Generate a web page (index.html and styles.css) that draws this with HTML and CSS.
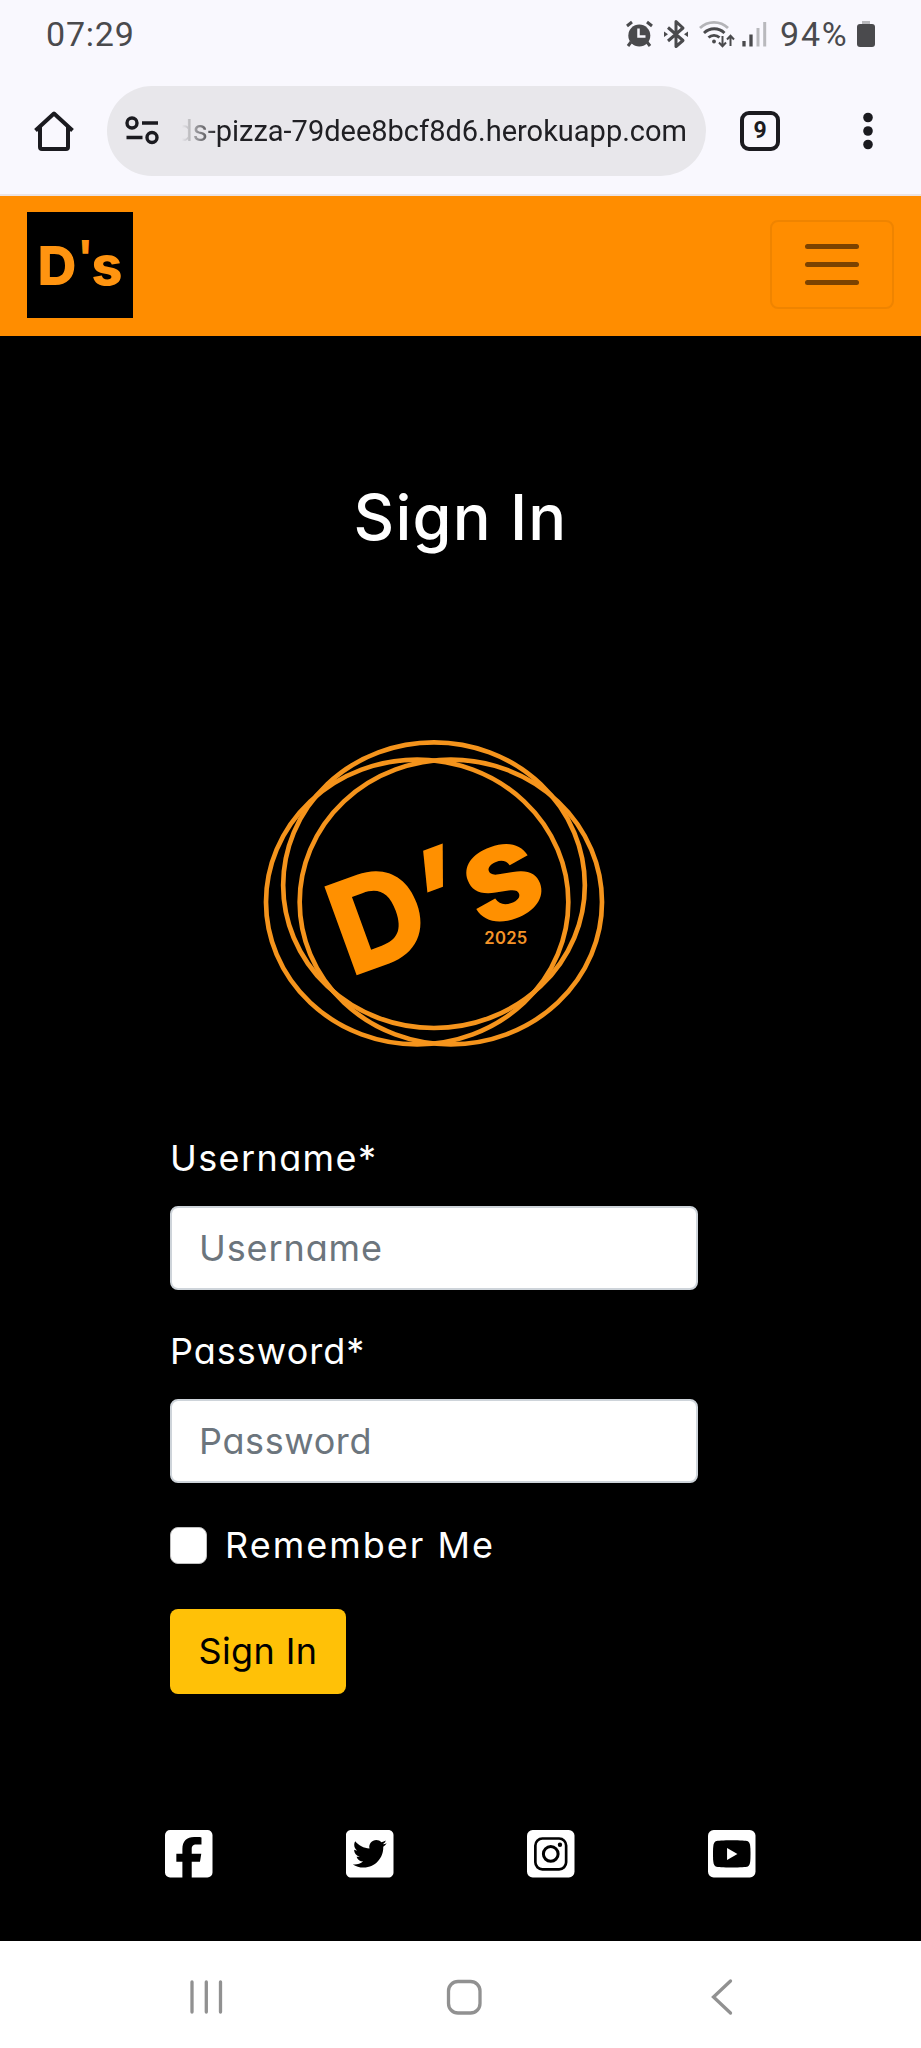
FILE: index.html
```html
<!DOCTYPE html>
<html lang="en">
<head>
<meta charset="utf-8">
<title>D's - Sign In</title>
<link rel="stylesheet" href="styles.css">
</head>
<body>
<div class="status">
  <span class="clock">07:29</span>
  <div class="status-right">
    <svg class="sys-icons" width="144" height="30" viewBox="0 0 144 30">
      <g fill="#4a4a4d" stroke="#4a4a4d">
        <circle cx="14.300" cy="16.500" r="11" stroke="none"/>
        <path d="M6 23l-3 4M22 23l3 4M2 7l5-4M27 7l-5-4" fill="none" stroke-width="3"/>
        <path d="M13.500 9.500v8h7" fill="none" stroke="#f9f8fe" stroke-width="2.500"/>
        <path d="M43 8.500l15 13-7 6V2.500l7 6.500-15 13" fill="none" stroke-width="3" stroke-linejoin="round"/>
        <path d="M39 12.500l4 2.700-4 2.700zM63 12.500l-4 2.700 4 2.700z" stroke="none"/>
        <path d="M75 9a20 20 0 0 1 28 0" fill="none" stroke="#b4b4b8" stroke-width="2.800"/>
        <path d="M79 14a14.500 14.500 0 0 1 20.500 0M83.500 18.500a8 8 0 0 1 11 0" fill="none" stroke-width="2.800"/>
        <circle cx="89" cy="22.500" r="1.900" stroke="none"/>
        <path d="M97.500 17v9.500M94 23.500l3.500 3.700 3.500-3.700M105.500 27V17.500M102 20.500l3.500-3.700 3.500 3.700" fill="none" stroke-width="2"/>
        <path d="M119 22v5.500M126 15.500v12" stroke-width="3.300"/>
        <path d="M133 9v18.500M139.700 3v24.500" stroke="#b9b9bd" stroke-width="3"/>
      </g>
    </svg>
    <span class="percent">94%</span>
    <svg width="18" height="28" viewBox="0 0 18 28"><path d="M5 1h8v4H5z" fill="#b9b9bd"/><rect y="4" width="18" height="23" rx="3" fill="#4a4a4d"/></svg>
  </div>
</div>
<div class="toolbar">
  <svg class="home" width="42" height="42" viewBox="0 0 42 42" fill="none" stroke="#1b1b20" stroke-width="4"><path d="M7 17v20q0 2 2 2h24q2 0 2-2V17M2.500 20.500L21 3.500l18.500 17" stroke-linejoin="round"/></svg>
  <div class="address">
    <svg width="34" height="30" viewBox="0 0 34 30" fill="none" stroke="#1b1b20" stroke-width="3.400"><circle cx="7" cy="7" r="5"/><circle cx="27" cy="21.500" r="5"/><path d="M17 7h16M1.500 21.500h16"/></svg>
    <span class="url">ds-pizza-79dee8bcf8d6.herokuapp.com</span>
  </div>
  <div class="tabs">9</div>
  <svg class="more" width="12" height="40" viewBox="0 0 12 40" fill="#1b1b20"><circle cx="6" cy="6.500" r="4.800"/><circle cx="6" cy="20" r="4.800"/><circle cx="6" cy="33.500" r="4.800"/></svg>
</div>
<header class="navbar">
  <svg class="brand" width="106" height="106" viewBox="0 0 106 106"><rect width="106" height="106"/><text class="brand-text"><tspan x="10.500" y="72.500">D</tspan><tspan class="mark" x="50.500" y="60">'</tspan><tspan x="64.500" y="72.500">s</tspan></text></svg>
  <button class="toggler" aria-label="Menu"><i></i><i></i><i></i></button>
</header>
<main>
  <h1>Sign In</h1>
  <svg class="emblem" width="370" height="340" viewBox="0 0 1110 1020">
    <g fill="none" stroke="#f5941c" stroke-width="14">
      <ellipse cx="552" cy="495.500" rx="452.500" ry="428.500"/>
      <ellipse cx="501.500" cy="546" rx="453.500" ry="427"/>
      <ellipse cx="602.500" cy="546" rx="453.500" ry="427"/>
    </g>
    <g class="emblem-text" transform="rotate(-20)">
      <text x="17" y="829">D</text>
      <text transform="translate(370 829) skewX(-17)" x="-71" y="0" text-anchor="middle">'</text>
      <text class="emblem-s" x="547" y="828" text-anchor="middle">s</text>
    </g>
    <text class="year" x="703" y="671" textLength="129">2025</text>
  </svg>
  <form class="signin">
    <label class="user-label" for="user">Username*</label>
    <input class="field user" id="user" type="text" placeholder="Username">
    <label class="pass-label" for="pass">Password*</label>
    <input class="field pass" id="pass" type="password" placeholder="Password">
    <div class="remember"><input class="box" id="rem" type="checkbox"><label for="rem">Remember Me</label></div>
    <button class="submit" type="button">Sign In</button>
  </form>
  <footer class="social">
    <svg viewBox="0 32 448 448"><path d="M400 32H48A48 48 0 0 0 0 80v352a48 48 0 0 0 48 48h116V332h-57v-76h57v-45c0-75 42-113 110-113 36 0 70 4 70 4v66h-48c-34 0-44 18-44 40v48h90l-12 76h-78v148h148a48 48 0 0 0 48-48V80a48 48 0 0 0-48-48z"/></svg>
    <svg viewBox="0 32 448 448"><path d="M400 32H48C21.500 32 0 53.500 0 80v352c0 26.500 21.500 48 48 48h352c26.500 0 48-21.500 48-48V80c0-26.500-21.500-48-48-48zm-48.900 158.800c.2 2.800.2 5.700.2 8.500 0 86.700-66 186.600-186.600 186.600-37.200 0-71.700-10.800-100.700-29.400 5.300.6 10.400.8 15.800.8 30.700 0 58.900-10.400 81.400-28-28.800-.6-53-19.500-61.300-45.500 10.100 1.500 19.200 1.500 29.600-1.200-30-6.100-52.500-32.500-52.500-64.400v-.8c8.700 4.900 18.900 7.900 29.600 8.300a65.447 65.447 0 0 1-29.200-54.600c0-12.200 3.200-23.400 8.900-33.100 32.300 39.800 80.800 65.800 135.200 68.600-9.300-44.500 24-80.600 64-80.600 18.900 0 35.900 7.900 47.900 20.700 14.800-2.800 29-8.300 41.600-15.800-4.900 15.200-15.200 28-28.800 36.100 13.200-1.400 26-5.100 37.800-10.200-8.900 13.100-20.100 24.700-32.900 34z"/></svg>
    <svg viewBox="0 0 142 142"><rect width="142" height="142" rx="17"/><g fill="none" stroke="#000"><rect x="25" y="25.500" width="92" height="92" rx="21" stroke-width="8"/><circle cx="71" cy="71.500" r="22" stroke-width="9"/></g><circle cx="98.500" cy="44" r="6.500" fill="#000"/></svg>
    <svg viewBox="0 0 142 142"><rect width="142" height="142" rx="17"/><path d="M71 31c25 0 43 1 48 3 8 4 8 20 8 38s0 33-8 37c-5 2-23 3-48 3s-43-1-48-3c-8-4-8-19-8-37s0-34 8-38c5-2 23-3 48-3z" fill="#000"/><path d="M57 54v36l31-18z"/></svg>
  </footer>
</main>
<nav class="sysnav">
  <svg width="40" height="40" viewBox="0 0 40 40"><path d="M6 5v30M20.300 5v30M34.500 5v30"/></svg>
  <svg width="40" height="40" viewBox="0 0 40 40"><rect x="3.500" y="4.500" width="31.500" height="31.500" rx="9.500"/></svg>
  <svg width="40" height="40" viewBox="0 0 40 40"><path d="M27.500 4L10.500 20l17 16"/></svg>
</nav>
</body>
</html>
```
FILE: styles.css
```css
* { box-sizing: border-box; }
body { margin: 0; width: 921px; height: 2048px; background: #f9f8fe; font-family: Inter, "Liberation Sans", sans-serif; overflow: hidden; }
svg { display: block; flex: none; }

.status { height: 68px; padding: 0 46px; display: flex; align-items: center; justify-content: space-between; color: #4a4a4d; font: 34px/68px Roboto, sans-serif; }
.clock { letter-spacing: .8px; }
.status-right { display: flex; align-items: center; }
.percent { margin: 0 2px 0 11px; width: 75px; letter-spacing: 1.800px; }

.toolbar { height: 128px; padding: 20px 47.500px 20px 33px; display: flex; align-items: center; border-bottom: 2px solid #ece4e4; }
.address { flex: none; width: 599px; height: 90px; margin: 0 34px 0 32px; padding: 0 19px 0 18px; display: flex; align-items: center; gap: 17px; border-radius: 45px; background: #e8e7eb; }
.url { flex: 1; display: flex; justify-content: flex-end; overflow: hidden; white-space: nowrap; font: 29px/44px Roboto, sans-serif; color: #202024; -webkit-mask-image: linear-gradient(90deg, transparent 6px, #000 42px); }
.tabs { flex: none; width: 40px; height: 40px; border: 4px solid #1b1b20; border-radius: 9px; text-align: center; font: 700 23px/32px Roboto, sans-serif; color: #1b1b20; }
.more { margin-left: 81.500px; }

.navbar { height: 140px; padding: 0 27px 3px; display: flex; align-items: center; justify-content: space-between; background: #ff8d00; }
.brand-text { font: 800 54px Inter, sans-serif; fill: #ff9410; }
.mark { font-size: 44px; }
.toggler { width: 124px; height: 89px; padding: 0; display: flex; flex-direction: column; align-items: center; justify-content: center; gap: 13.300px; border: 2px solid #ef8400; border-radius: 8px; background: none; }
.toggler i { width: 54px; height: 4.700px; border-radius: 3px; background: #7b4200; }

main { height: 1604.500px; padding-top: 144px; background: #000; color: #fff; }
h1 { margin: 0 0 165px; height: 75px; text-align: center; font-size: 63px; line-height: 75px; font-weight: 500; letter-spacing: 1.200px; }
.emblem { margin-left: 250px; }
.emblem-text { font: 800 389px Inter, sans-serif; fill: #ff9000; }
.emblem-s { font-size: 404px; }
.year { font: 600 50px Inter, sans-serif; fill: #f59428; }

.signin { width: 528px; margin: 72px 0 0 170px; display: flex; flex-direction: column; font-size: 36px; font-feature-settings: "cv11"; }
.signin label { line-height: 53px; height: 54px; }
.user-label { letter-spacing: 1.400px; }
.pass-label { letter-spacing: 1px; }
.field { width: 528px; height: 84px; margin: 20px 0 35px; padding: 0 27px 1px; border: 2px solid #ced4da; border-radius: 8px; background: #fff; font: inherit; font-feature-settings: inherit; }
.user { letter-spacing: .9px; }
.pass { letter-spacing: .6px; }
.field::placeholder { color: #6c757d; opacity: 1; }
.remember { height: 55px; margin-bottom: 36px; display: flex; align-items: center; gap: 18px; letter-spacing: 2px; }
.box { appearance: none; width: 37px; height: 37px; margin: 0; border: 1px solid #bfbfbf; border-radius: 8px; background: #fff; }
.submit { width: 176px; height: 85px; padding: 0 0 2px; border: 0; border-radius: 8px; background: #ffc107; color: #000; font: inherit; letter-spacing: .4px; font-feature-settings: inherit; }

.social { margin: 136px 165px 0; display: flex; justify-content: space-between; }
.social svg { width: 47.500px; height: 47.500px; fill: #fff; }

.sysnav { height: 107.500px; padding: 0 178px 0 186px; display: flex; align-items: center; justify-content: space-between; background: #fff; }
.sysnav svg { margin-top: 5px; fill: none; stroke: #919191; stroke-width: 3.300; stroke-linecap: round; }
```
